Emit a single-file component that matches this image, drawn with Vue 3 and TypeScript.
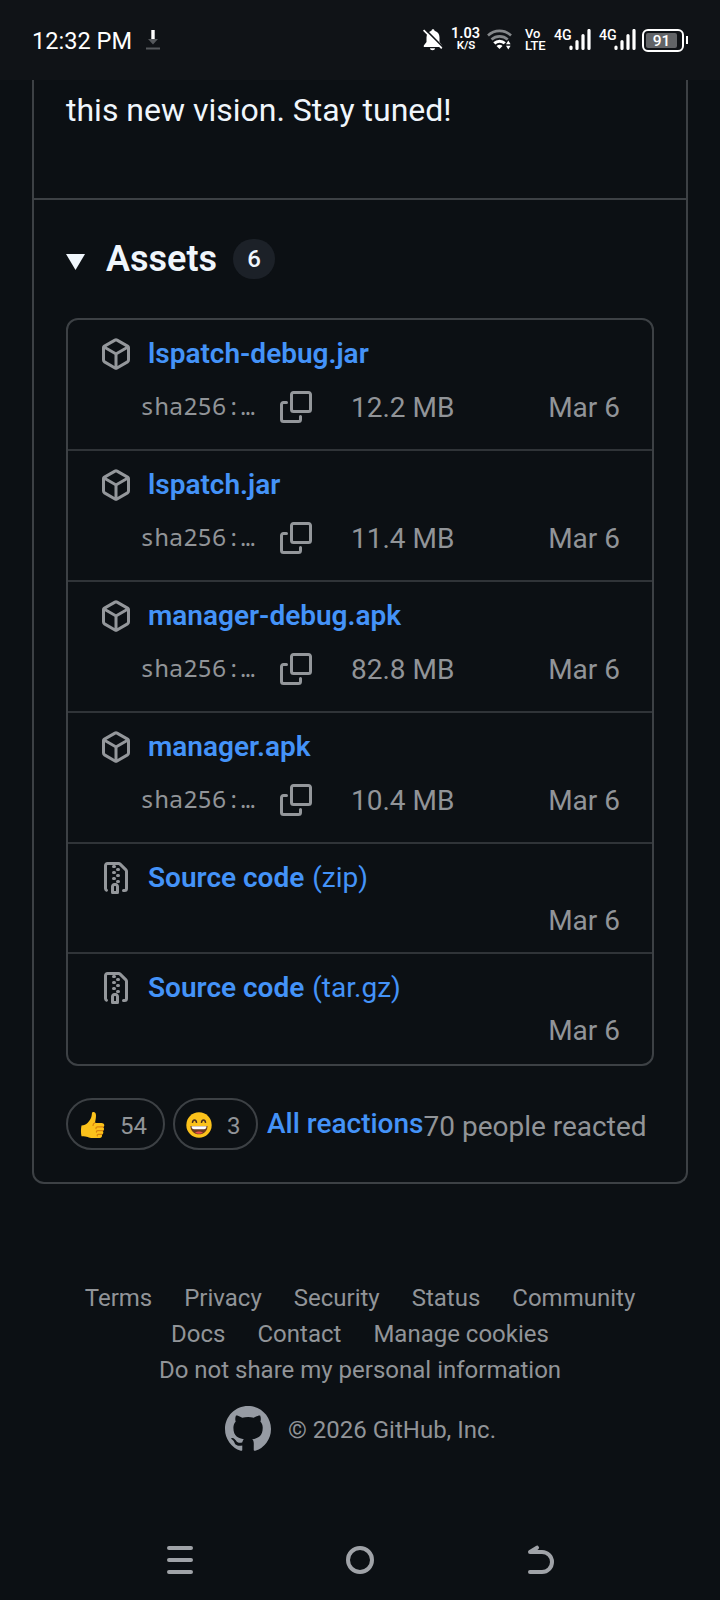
<script setup lang="ts">
interface Asset {
  name: string
  size: string
}
interface Source {
  kind: string
}
const assets: Asset[] = [
  { name: 'lspatch-debug.jar', size: '12.2 MB' },
  { name: 'lspatch.jar', size: '11.4 MB' },
  { name: 'manager-debug.apk', size: '82.8 MB' },
  { name: 'manager.apk', size: '10.4 MB' },
]
const sources: Source[] = [{ kind: '(zip)' }, { kind: '(tar.gz)' }]
const footerRows: string[][] = [
  ['Terms', 'Privacy', 'Security', 'Status', 'Community'],
  ['Docs', 'Contact', 'Manage cookies'],
  ['Do not share my personal information'],
]
</script>

<template>
  <div class="screen">
    <header class="status">
      <span class="clock">12:32 PM</span>
      <svg class="download" width="14" height="20" viewBox="0 0 14 20">
        <path d="M2 9h10l-5 5.500z" fill="#55585c" />
        <path d="M5.300 0h3.400v9H5.300z" fill="#fff" />
        <path d="M0 17.500h14v2H0z" fill="#55585c" />
      </svg>
      <svg class="bell" width="20" height="22" viewBox="0 0 20 22">
        <path d="M10 .3c-.9 0-1.500.6-1.500 1.400-3 .8-5 3.300-5 6.500v4.800L.8 16.500V18h18.400v-1.500L16.500 13V8.200c0-3.200-2-5.700-5-6.500C11.500.9 10.900.3 10 .3zM7 19.200h5c0 1.300-1 2-2.500 2S7 20.500 7 19.200z" fill="#fff" />
        <path d="M2 .2 20.500 18.700" stroke="#101317" stroke-width="1.800" />
        <path d="M.6 1.200 18.800 19.400" stroke="#fff" stroke-width="1.700" />
      </svg>
      <div class="speed"><span>1.03</span><small>K/S</small></div>
      <svg class="wifi" width="26" height="22" viewBox="0 0 26 22">
        <g fill="none" stroke-width="2.600">
          <path d="M1 6.500c6.500-6.200 16.500-6.200 23 0" stroke="#85888b" />
          <path d="M4.500 10.500c4.700-4.200 11.500-4.200 16.200 0" stroke="#85888b" />
          <path d="M7.300 14.300c3-2.900 7.600-2.900 10.500 0" stroke="#fff" stroke-width="3" />
        </g>
        <path d="M9.500 17c2-1.700 4.500-1.700 6 0L12.500 20z" fill="#fff" />
        <path d="m21.300 11.500 2.300 3.800h-4.600zM21.300 20.500l2.300-3.800h-4.600z" fill="#fff" />
      </svg>
      <div class="volte"><span>Vo</span><span>LTE</span></div>
      <div v-for="n in 2" :key="n" class="signal">
        <span>4G</span>
        <svg width="22" height="22" viewBox="0 0 22 22">
          <path d="M2 18v1.500M8 12.500v7M14 6.500v13M20 1.500v18" stroke="#fff" stroke-width="3.200" stroke-linecap="round" />
        </svg>
      </div>
      <div class="battery"><b>91</b></div>
      <i class="battery-tip"></i>
    </header>

    <main class="release">
      <p class="notes">this new vision. Stay tuned!</p>
      <section class="assets">
        <h3>
          <svg class="caret" width="19" height="16" viewBox="0 0 19 16"><path d="M0 0h19L9.500 16z" fill="#f0f6fc" /></svg>
          <span class="title">Assets</span>
          <span class="counter">6</span>
        </h3>
        <ul>
          <li v-for="a in assets" :key="a.name">
            <div class="line">
              <svg class="icon" width="32" height="32" viewBox="0 0 16 16"><path d="m8.878.392 5.250 3.045c.54.314.872.89.872 1.514v6.098a1.750 1.750 0 0 1-.872 1.514l-5.250 3.045a1.750 1.750 0 0 1-1.756 0l-5.250-3.045A1.750 1.750 0 0 1 1 11.049V4.951c0-.624.332-1.201.872-1.514L7.122.392a1.750 1.750 0 0 1 1.756 0ZM7.875 1.690l-4.630 2.685L8 7.133l4.755-2.758-4.630-2.685a.248.248 0 0 0-.25 0ZM2.500 5.677v5.372c0 .09.047.171.125.216l4.625 2.683V8.432Zm6.250 8.271 4.625-2.683a.25.25 0 0 0 .125-.216V5.677L8.750 8.432Z" /></svg>
              <a>{{ a.name }}</a>
            </div>
            <div class="meta">
              <code>sha256:…</code>
              <svg class="icon copy" width="32" height="32" viewBox="0 0 16 16"><path d="M0 6.750C0 5.784.784 5 1.750 5h1.500a.75.75 0 0 1 0 1.500h-1.500a.25.25 0 0 0-.25.25v7.500c0 .138.112.25.25.25h7.500a.25.25 0 0 0 .25-.25v-1.500a.75.75 0 0 1 1.500 0v1.500A1.750 1.750 0 0 1 9.250 16h-7.500A1.750 1.750 0 0 1 0 14.250Z" /><path d="M5 1.750C5 .784 5.784 0 6.750 0h7.500C15.216 0 16 .784 16 1.750v7.500A1.750 1.750 0 0 1 14.250 11h-7.500A1.750 1.750 0 0 1 5 9.250Zm1.750-.25a.25.25 0 0 0-.25.25v7.500c0 .138.112.25.25.25h7.500a.25.25 0 0 0 .25-.25v-7.500a.25.25 0 0 0-.25-.25Z" /></svg>
              <span class="size">{{ a.size }}</span>
              <span class="date">Mar 6</span>
            </div>
          </li>
          <li v-for="s in sources" :key="s.kind" class="source">
            <div class="line">
              <svg class="icon" width="32" height="32" viewBox="0 0 16 16"><path d="M3.500 1.750v11.500c0 .09.048.173.126.217a.75.75 0 0 1-.752 1.298A1.748 1.748 0 0 1 2 13.250V1.750C2 .784 2.784 0 3.750 0h5.586c.464 0 .909.185 1.237.513l2.914 2.914c.329.328.513.773.513 1.237v8.586A1.750 1.750 0 0 1 12.250 15h-.5a.75.75 0 0 1 0-1.500h.5a.25.25 0 0 0 .25-.25V4.664a.25.25 0 0 0-.073-.177L9.513 1.573a.25.25 0 0 0-.177-.073H7.250a.75.75 0 0 1 0 1.500h-.5a.75.75 0 0 1 0-1.500h-3a.25.25 0 0 0-.25.25Zm3.750 8.750h.5c.966 0 1.750.784 1.750 1.750v3a.75.75 0 0 1-.75.75h-2.500a.75.75 0 0 1-.75-.75v-3c0-.966.784-1.750 1.750-1.750ZM6 5.250a.75.75 0 0 1 .75-.75h.5a.75.75 0 0 1 0 1.500h-.5A.75.75 0 0 1 6 5.250Zm.75 2.250h.5a.75.75 0 0 1 0 1.500h-.5a.75.75 0 0 1 0-1.500ZM8 6.750A.75.75 0 0 1 8.750 6h.5a.75.75 0 0 1 0 1.500h-.5A.75.75 0 0 1 8 6.750ZM8.750 3h.5a.75.75 0 0 1 0 1.500h-.5a.75.75 0 0 1 0-1.500ZM8 9.750A.75.75 0 0 1 8.750 9h.5a.75.75 0 0 1 0 1.500h-.5A.75.75 0 0 1 8 9.750Zm-1 2.500v2.250h1v-2.250a.25.25 0 0 0-.25-.25h-.5a.25.25 0 0 0-.25.25Z" /></svg>
              <a>Source code <span>{{ s.kind }}</span></a>
            </div>
            <div class="date">Mar 6</div>
          </li>
        </ul>
        <div class="reactions">
          <span class="pill thumb">
            <svg width="26" height="28" viewBox="0 0 26 28">
              <path d="M1.500 14.500c2.500-.2 4.500-.8 6-2.500 2.500-2.800 4-4.500 4.400-9.500C12.100.5 16 .300 16 4.500c0 3-.8 5.500-1 7.500h6.500c3.300 0 3.500 3.500 1.600 4.200 1.600.9 1.200 3.300-.4 3.700 1.200 1 .7 3.200-.9 3.500.8 1.800-.3 3.600-2.300 3.600h-7c-4 0-5-1.700-11-1.700C.800 22.500.800 17.500 1.500 14.500z" fill="#fcc21b" />
              <path d="M23.300 15.900h-5.500c-1.500 0-2 .8-1.800 1.700M22.800 19.700h-5c-1.200 0-1.500.8-1.300 1.500M21.800 23.400h-3.500c-1 0-1.300.7-1 1.500M15 11.800c-1.300.4-2 1.200-2 2.700" fill="none" stroke="#d9820f" stroke-width="1.200" stroke-linecap="round" />
            </svg>
            <span>54</span>
          </span>
          <span class="pill grin">
            <svg width="26" height="26" viewBox="0 0 26 26">
              <circle cx="13" cy="13" r="12.700" fill="#fcc21b" />
              <path d="M4.500 14h17c0 5-3.700 8.300-8.500 8.300S4.500 19 4.500 14z" fill="#6b3a1e" />
              <path d="M5.500 14.200h15c0 1.900-1 3-2.500 3H8c-1.500 0-2.500-1.100-2.500-3z" fill="#fff" />
              <path d="M9 20.800c2.200-1.600 5.800-1.600 8 0-2.300 1.400-5.700 1.400-8 0z" fill="#ee4f4b" />
              <path d="M6.500 10.300c.5-3 3.500-3 4 0M15.500 10.300c.5-3 3.500-3 4 0" fill="none" stroke="#4a3020" stroke-width="1.600" stroke-linecap="round" />
            </svg>
            <span>3</span>
          </span>
          <a>All reactions</a><span class="people">70 people reacted</span>
        </div>
      </section>
    </main>

    <footer>
      <nav v-for="(row, i) in footerRows" :key="i"><a v-for="l in row" :key="l">{{ l }}</a></nav>
      <div class="copyright">
        <svg width="46" height="46" viewBox="0 0 16 16"><path d="M8 0c4.420 0 8 3.580 8 8a8.013 8.013 0 0 1-5.450 7.590c-.4.08-.55-.17-.55-.38 0-.27.01-1.130.01-2.200 0-.75-.25-1.230-.54-1.480 1.780-.2 3.650-.88 3.650-3.950 0-.88-.31-1.590-.82-2.150.08-.2.36-1.020-.08-2.120 0 0-.67-.22-2.200.82-.64-.18-1.320-.27-2-.27-.68 0-1.360.09-2 .27-1.530-1.030-2.200-.82-2.200-.82-.44 1.100-.16 1.920-.08 2.120-.51.56-.82 1.280-.82 2.150 0 3.060 1.860 3.750 3.640 3.950-.23.2-.44.55-.51 1.070-.46.21-1.610.55-2.330-.66-.15-.24-.6-.83-1.230-.82-.67.01-.27.38.01.53.34.19.73.9.82 1.130.16.45.68 1.310 2.690.94 0 .67.01 1.300.01 1.490 0 .21-.15.45-.55.38A7.995 7.995 0 0 1 0 8c0-4.420 3.580-8 8-8Z" fill="#969ba3" /></svg>
        <span>© 2026 GitHub, Inc.</span>
      </div>
    </footer>

    <div class="navbar">
      <svg width="28" height="30" viewBox="0 0 28 30"><path d="M3 3h22M3 15h22M3 27h22" /></svg>
      <svg width="28" height="30" viewBox="0 0 28 30"><circle cx="14" cy="15" r="12" /></svg>
      <svg width="28" height="30" viewBox="0 0 28 30"><path d="M4 27h12a10 10 0 0 0 0-20H4l7-4.300" /></svg>
    </div>
  </div>
</template>

<style>
html,
body {
  margin: 0;
  background: #0c1014;
}
</style>

<style scoped>
.screen {
  width: 720px;
  height: 1600px;
  overflow: hidden;
  display: flex;
  flex-direction: column;
  background: #0c1014;
  color: #f0f6fc;
  font-family: Roboto, 'Liberation Sans', sans-serif;
  font-size: 28px;
}
* {
  box-sizing: border-box;
}
svg {
  display: block;
  flex: none;
}
.status {
  height: 80px;
  flex: none;
  display: flex;
  align-items: center;
  background: #101317;
  color: #fff;
  padding-left: 32px;
  white-space: nowrap;
}
.clock {
  width: 114px;
  font-size: 23.600px;
  line-height: 28px;
  padding-top: 1px;
}
.bell {
  margin-left: 263px;
}
.speed {
  width: 28px;
  margin: -2px 0 0 9px;
  text-align: center;
  font-weight: 600;
}
.speed span {
  display: block;
  font-size: 14.500px;
  line-height: 13px;
  margin-left: -1px;
}
.speed small {
  display: block;
  font-size: 11.500px;
  line-height: 11px;
}
.wifi {
  margin-left: 7px;
}
.volte {
  width: 21px;
  margin-left: 12px;
  font-size: 13px;
  line-height: 12px;
  font-weight: 500;
}
.volte span {
  display: block;
}
.signal {
  display: flex;
  width: 38px;
  margin-left: 8px;
  font-size: 14.200px;
  font-weight: 500;
  line-height: 13px;
}
.signal + .signal {
  margin-left: 7px;
}
.signal span {
  width: 15px;
}
.battery {
  width: 42px;
  height: 23px;
  margin-left: 5px;
  padding: 2px;
  border: 2px solid #fff;
  border-radius: 6px;
}
.battery b {
  display: block;
  width: 31px;
  height: 15px;
  background: #626467;
  border-radius: 2px;
  font-size: 15.500px;
  line-height: 16px;
  font-weight: 500;
  text-align: center;
}
.battery-tip {
  width: 2px;
  height: 8px;
  margin-left: 2px;
  background: #fff;
}
.release {
  width: 656px;
  height: 1104px;
  flex: none;
  margin-left: 32px;
  border: 2px solid #3d4145;
  border-top: 0;
  border-radius: 0 0 12px 12px;
}
.notes {
  margin: 0;
  height: 118px;
  padding: 6px 0 0 32px;
  font-size: 32px;
  line-height: 48px;
}
.assets {
  border-top: 2px solid #3d4145;
  padding: 0 32px;
}
h3 {
  margin: 0;
  height: 118px;
  display: flex;
  align-items: center;
  font-weight: 600;
}
.caret {
  margin-top: 5px;
}
.title {
  margin-left: 21px;
  width: 127px;
  font-size: 36px;
}
.counter {
  width: 42px;
  height: 40px;
  border-radius: 21px;
  background: #1c2128;
  font-size: 24px;
  line-height: 40px;
  font-weight: 500;
  text-align: center;
}
ul {
  list-style: none;
  margin: 0;
  padding: 0;
  border: 2px solid #3d4145;
  border-radius: 12px;
}
li {
  height: 131px;
  padding: 12px 32px 0;
  border-top: 2px solid #303438;
}
li:first-child {
  height: 129px;
  border-top: 0;
}
.source {
  height: 110px;
}
.source:last-child {
  height: 112px;
}
.line {
  display: flex;
  align-items: center;
  height: 44px;
}
.icon {
  fill: #94979b;
}
.line a {
  margin: -2px 0 0 16px;
}
a {
  color: #4493f8;
  font-weight: 600;
}
.line a span {
  margin-left: 1px;
  font-weight: 400;
}
.meta {
  display: flex;
  align-items: center;
  height: 62px;
  color: #919498;
}
code {
  width: 119px;
  margin: -4px 0 0 40px;
  font: 24px 'Noto Sans Mono', 'DejaVu Sans Mono', monospace;
}
.copy {
  margin-left: 21px;
}
.size {
  margin-left: 39px;
}
.date {
  margin-left: auto;
  color: #919498;
  text-align: right;
}
.source .date {
  line-height: 42px;
}
.reactions {
  display: flex;
  align-items: center;
  margin-top: 32px;
  height: 52px;
  white-space: nowrap;
}
.pill {
  display: flex;
  align-items: center;
  height: 52px;
  border: 2px solid #3d4145;
  border-radius: 26px;
  color: #919498;
  font-size: 24px;
}
.thumb {
  width: 99px;
  padding-left: 12px;
}
.grin {
  width: 85px;
  padding-left: 11px;
  margin-left: 8px;
}
.pill svg {
  margin-top: 2px;
}
.pill span {
  margin: 4px 0 0 14px;
}
.grin span {
  margin-left: 15px;
}
.reactions a {
  margin: -2px 0 0 9px;
  font-weight: 500;
}
.people {
  margin-top: 4px;
  color: #919498;
}
footer {
  flex: 1;
  padding-top: 96px;
  color: #919498;
  font-size: 24px;
}
nav {
  display: flex;
  justify-content: center;
  gap: 32px;
  height: 36px;
  line-height: 36px;
}
nav a {
  color: inherit;
  font-weight: 400;
}
.copyright {
  display: flex;
  align-items: center;
  justify-content: center;
  gap: 17px;
  margin-top: 18px;
  padding-left: 1px;
}
.copyright span {
  padding-top: 2px;
}
.navbar {
  height: 80px;
  flex: none;
  display: flex;
  justify-content: space-between;
  align-items: center;
  padding: 0 166px;
}
.navbar path,
.navbar circle {
  fill: none;
  stroke: #a0a3a8;
  stroke-width: 4;
  stroke-linecap: round;
  stroke-linejoin: round;
}
</style>
